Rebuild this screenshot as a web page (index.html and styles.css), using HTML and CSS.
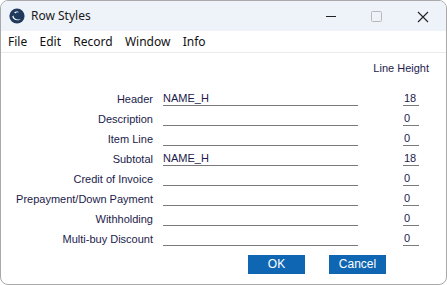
FILE: index.html
```html
<!DOCTYPE html>
<html>
<head>
<meta charset="utf-8">
<link rel="stylesheet" href="styles.css">
</head>
<body>
<div class="window">
  <div class="titlebar">
    <svg class="logo" width="16" height="16" viewBox="0 0 16 16">
      <circle cx="8" cy="8" r="7.6" fill="#1f3a5c"/>
      <path d="M3.2 8.6 C4 12.4 9.6 13.6 12.6 10.4 C11.6 11.6 7.8 12.2 5.8 10.2 C5 9.4 4.6 8.6 4.6 7.4 Z" fill="#ffffff"/>
      <path d="M5.2 4.2 C6.6 3.2 9.4 3 10.4 4.6 C9 4 7.2 4.4 6.2 5.6 Z" fill="#ffffff"/>
    </svg>
    <span class="title">Row Styles</span>
    <div class="controls">
      <svg class="ctl" width="46" height="31" viewBox="0 0 46 31"><line x1="18" y1="15.5" x2="28" y2="15.5" stroke="#222" stroke-width="1"/></svg>
      <svg class="ctl" width="46" height="31" viewBox="0 0 46 31"><rect x="17.5" y="10.5" width="10" height="10" rx="1" fill="none" stroke="#b8b8b8" stroke-width="1"/></svg>
      <svg class="ctl" width="46" height="31" viewBox="0 0 46 31"><path d="M18 11 L28 21 M28 11 L18 21" stroke="#222" stroke-width="1.1"/></svg>
    </div>
  </div>
  <div class="menubar">
    <span class="menu">File</span>
    <span class="menu">Edit</span>
    <span class="menu">Record</span>
    <span class="menu">Window</span>
    <span class="menu">Info</span>
  </div>
  <div class="content">
    <div class="colhead">Line Height</div>
    <div class="form">
      <div class="label">Header</div><div class="field">NAME_H</div><div class="num">18</div>
      <div class="label">Description</div><div class="field"></div><div class="num">0</div>
      <div class="label">Item Line</div><div class="field"></div><div class="num">0</div>
      <div class="label">Subtotal</div><div class="field">NAME_H</div><div class="num">18</div>
      <div class="label">Credit of Invoice</div><div class="field"></div><div class="num">0</div>
      <div class="label">Prepayment/Down Payment</div><div class="field"></div><div class="num">0</div>
      <div class="label">Withholding</div><div class="field"></div><div class="num">0</div>
      <div class="label">Multi-buy Discount</div><div class="field"></div><div class="num">0</div>
    </div>
    <div class="buttons">
      <div class="btn">OK</div>
      <div class="btn">Cancel</div>
    </div>
  </div>
</div>
</body>
</html>
```
FILE: styles.css
```css
html, body {
  margin: 0;
  padding: 0;
  background: #ffffff;
}
.window {
  width: 447px;
  height: 285px;
  box-sizing: border-box;
  border: 1px solid #a9a9a9;
  border-radius: 8px;
  overflow: hidden;
  background: #ffffff;
  display: flex;
  flex-direction: column;
}
.titlebar {
  height: 30px;
  flex: none;
  background: #eef2f9;
  display: flex;
  align-items: center;
  font-family: "Noto Sans", "Open Sans", sans-serif;
  font-size: 12px;
  color: #1a1a1a;
}
.logo {
  margin-left: 8px;
}
.title {
  margin-left: 6px;
  margin-top: -1px;
}
.controls {
  margin-left: auto;
  display: flex;
}
.ctl {
  display: block;
}
.menubar {
  height: 21px;
  flex: none;
  display: flex;
  align-items: center;
  padding-left: 7px;
  gap: 12.3px;
  font-family: "Noto Sans", "Open Sans", sans-serif;
  font-size: 12px;
  color: #111;
  border-bottom: 1px solid #ebebeb;
}
.content {
  flex: 1;
  font-family: "Liberation Sans", Arial, sans-serif;
  font-size: 11px;
  color: #1b1b4b;
  display: flex;
  flex-direction: column;
}
.colhead {
  text-align: right;
  padding-right: 17px;
  padding-top: 8px;
  line-height: 14px;
}
.form {
  margin-top: 14px;
  display: grid;
  grid-template-columns: 152px 205px 61px;
  grid-auto-rows: 20px;
}
.label {
  text-align: right;
  line-height: 20px;
  white-space: nowrap;
}
.field {
  margin-left: 10px;
  margin-top: 2px;
  height: 14px;
  line-height: 15px;
  border-bottom: 1px solid #7a7a7a;
}
.num {
  margin-left: 45px;
  width: 15px;
  margin-top: 2px;
  height: 14px;
  line-height: 15px;
  padding-left: 1px;
  border-bottom: 1px solid #7a7a7a;
}
.buttons {
  margin-top: 6px;
  display: flex;
  gap: 24px;
  padding-left: 247px;
}
.btn {
  width: 57px;
  height: 19px;
  background: #0f67b3;
  color: #ffffff;
  font-size: 12px;
  line-height: 19px;
  text-align: center;
}
```
